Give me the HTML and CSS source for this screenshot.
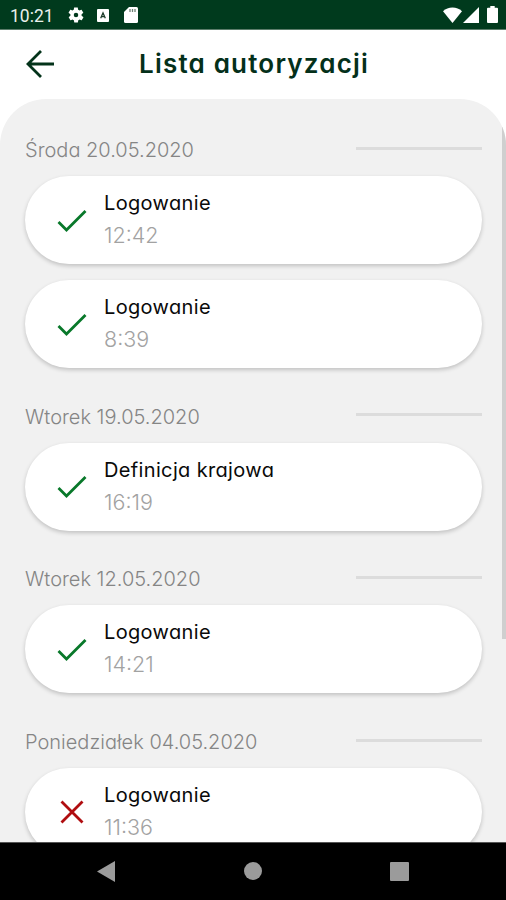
FILE: index.html
```html
<!DOCTYPE html>
<html lang="pl">
<head>
    <meta charset="UTF-8">
    <meta name="viewport" content="width=device-width, initial-scale=1.0">
    <title>Lista autoryzacji</title>
    <link rel="stylesheet" href="styles.css">
</head>
<body>
    <div class="phone">
        <div class="status-bar">
            <span class="clock">10:21</span>
            <svg class="icon-gear" width="18" height="18" viewBox="0 0 24 24"><path fill="#fff" fill-rule="evenodd" d="M19.4 13c.1-.3.1-.7.1-1s0-.7-.1-1l2.1-1.6c.2-.2.3-.4.1-.6l-2-3.500c-.1-.2-.4-.3-.6-.2l-2.500 1c-.5-.4-1.100-.7-1.700-1l-.4-2.600c0-.3-.2-.5-.5-.5h-4c-.2 0-.4.2-.5.4l-.4 2.700c-.6.2-1.100.6-1.700 1l-2.500-1c-.2-.1-.4 0-.6.2l-2 3.500c-.1.2 0 .4.1.6L4.600 11c-.1.3-.1.7-.1 1s0 .7.1 1l-2.100 1.600c-.2.2-.3.4-.1.6l2 3.500c.1.2.4.3.6.2l2.500-1c.5.4 1.100.7 1.700 1l.4 2.600c0 .3.2.5.5.5h4c.2 0 .4-.2.5-.5l.4-2.600c.6-.3 1.200-.6 1.700-1l2.500 1c.2.1.5 0 .6-.2l2-3.500c.1-.2.1-.4-.1-.6zM12 15a3 3 0 1 1 0-6 3 3 0 0 1 0 6z"/></svg>
            <svg class="icon-box" width="12" height="13" viewBox="0 0 12 13"><rect width="12" height="13" rx="1" fill="#fff"/><path d="M3.700 9.300 6 4l2.300 5.300M4.700 7.700h2.600" fill="none" stroke="#1c3c2a" stroke-width="1.300"/></svg>
            <svg class="icon-card" width="14" height="16" viewBox="0 0 14 16"><path fill="#fff" d="M5 0h7.500Q14 0 14 1.500v13q0 1.500-1.500 1.500h-11Q0 16 0 14.500V5z"/><path d="M6 2v3M8.500 2v3M11 2v3" stroke="#6d8075" stroke-width="1.300"/></svg>
            <div class="status-right">
                <svg width="19" height="16" viewBox="0 0 19 16"><path fill="#fff" d="M9.500 16 0 4.200Q4 .5 9.500.5T19 4.200z"/></svg>
                <svg width="16" height="16" viewBox="0 0 16 16"><path fill="#fff" d="M0 16 16 0v16z"/></svg>
                <svg class="icon-battery" width="11" height="17" viewBox="0 0 11 17"><path fill="#fff" d="M3.300 0h4.400v1.700H10q1 0 1 1V16q0 1-1 1H1q-1 0-1-1V2.700q0-1 1-1h2.300z"/></svg>
            </div>
        </div>

        <header class="header">
            <svg class="back" width="28" height="28" viewBox="0 0 28 28"><path d="M28 14H2M15 1 2 14l13 13" fill="none" stroke="#04331a" stroke-width="2.800"/></svg>
            <h1 class="title">Lista autoryzacji</h1>
        </header>

        <main class="panel">
            <section class="day">
                <div class="day-head"><span class="date">Środa 20.05.2020</span><span class="line"></span></div>
                <div class="card">
                    <svg class="mark" width="30" height="24" viewBox="0 0 30 24"><path class="ok" d="m1.500 13 8 8L28.500 2"/></svg>
                    <div><div class="name">Logowanie</div><div class="time">12:42</div></div>
                </div>
                <div class="card">
                    <svg class="mark" width="30" height="24" viewBox="0 0 30 24"><path class="ok" d="m1.500 13 8 8L28.500 2"/></svg>
                    <div><div class="name">Logowanie</div><div class="time">8:39</div></div>
                </div>
            </section>
            <section class="day">
                <div class="day-head"><span class="date">Wtorek 19.05.2020</span><span class="line"></span></div>
                <div class="card">
                    <svg class="mark" width="30" height="24" viewBox="0 0 30 24"><path class="ok" d="m1.500 13 8 8L28.500 2"/></svg>
                    <div><div class="name">Definicja krajowa</div><div class="time">16:19</div></div>
                </div>
            </section>
            <section class="day">
                <div class="day-head"><span class="date">Wtorek 12.05.2020</span><span class="line"></span></div>
                <div class="card">
                    <svg class="mark" width="30" height="24" viewBox="0 0 30 24"><path class="ok" d="m1.500 13 8 8L28.500 2"/></svg>
                    <div><div class="name">Logowanie</div><div class="time">14:21</div></div>
                </div>
            </section>
            <section class="day">
                <div class="day-head"><span class="date">Poniedziałek 04.05.2020</span><span class="line"></span></div>
                <div class="card">
                    <svg class="mark" width="30" height="24" viewBox="0 0 30 24"><path class="fail" d="m4.500 1.500 21 21M25.500 1.500l-21 21"/></svg>
                    <div><div class="name">Logowanie</div><div class="time">11:36</div></div>
                </div>
            </section>
            <div class="scrollbar"></div>
        </main>

        <nav class="nav-bar">
            <svg width="18" height="21" viewBox="0 0 18 21"><path fill="#9b9b9b" d="M18 0v21L0 10.500z"/></svg>
            <svg width="18" height="18" viewBox="0 0 18 18"><circle cx="9" cy="9" r="9" fill="#9b9b9b"/></svg>
            <svg width="19" height="19" viewBox="0 0 19 19"><rect width="19" height="19" rx="1" fill="#9b9b9b"/></svg>
        </nav>
    </div>
</body>
</html>
```
FILE: styles.css
```css
*{
    margin: 0;
    padding: 0;
    box-sizing: border-box;
}
body{
    background: #fff;
    font-family: Inter, "Open Sans", sans-serif;
    /* single-storey a */
    font-feature-settings: "cv11";
    overflow: hidden;
}
svg{
    display: block;
    flex: none;
}
.phone{
    display: flex;
    flex-direction: column;
    width: 506px;
    height: 900px;
    overflow: hidden;
}
/* status bar */
.status-bar{
    display: flex;
    align-items: center;
    flex: none;
    height: 30px;
    padding: 0 8px 0 10px;
    background: #003a1d;
    border-bottom: 1px solid #5c7d6b;
}
.clock{
    width: 57px;
    font-family: Roboto, sans-serif;
    font-size: 17.5px;
    color: #e9efeb;
    padding-top: 3px;
}
.icon-gear{
    margin-top: 1px;
}
.icon-box{
    margin-left: 12px;
    margin-top: 2px;
}
.icon-card{
    margin-left: 15px;
    margin-top: 1px;
}
.status-right{
    display: flex;
    align-items: center;
    gap: 1px;
    margin-left: auto;
}
.icon-battery{
    margin-left: 7px;
}
/* header */
.header{
    display: flex;
    align-items: center;
    flex: none;
    height: 68.5px;
    padding-left: 26px;
}
.title{
    margin-left: 85px;
    font-size: 26px;
    line-height: 36px;
    font-weight: 600;
    letter-spacing: 1.2px;
    color: #04301a;
}
/* list */
.panel{
    position: relative;
    flex: 1;
    min-height: 0;
    padding: 3px 24px 0 25px;
    background: #f1f1f1;
    border-radius: 46px 46px 0 0;
    overflow: hidden;
}
.day-head{
    display: flex;
    align-items: center;
    justify-content: space-between;
    height: 74.6px;
    padding-top: 19px;
}
.date{
    font-size: 20px;
    font-weight: 300;
    color: #858585;
    padding-top: 4px;
}
.line{
    width: 126px;
    height: 3px;
    background: #dcdcdc;
}
.card{
    display: flex;
    align-items: center;
    height: 88px;
    padding-left: 32px;
    background: #fff;
    border-radius: 44px;
    box-shadow: 0 2px 4px rgba(0, 0, 0, .2);
}
.card + .card{
    margin-top: 16px;
}
.mark{
    margin-top: 1px;
    margin-right: 17px;
}
.mark path{
    fill: none;
    stroke-width: 2.8;
}
.ok{
    stroke: #08782a;
}
.fail{
    stroke: #b00d10;
}
.name{
    font-size: 20px;
    line-height: 33px;
    letter-spacing: 0.35px;
    color: #0a0a0a;
}
.time{
    font-size: 21.5px;
    line-height: 31px;
    padding-bottom: 2px;
    font-weight: 350;
    color: #a2a2a2;
}
.scrollbar{
    position: absolute;
    top: 28px;
    right: 0;
    width: 4px;
    height: 512px;
    background: #cfcfcf;
}
/* navigation bar */
.nav-bar{
    display: flex;
    align-items: center;
    justify-content: space-between;
    flex: none;
    height: 58.5px;
    padding: 0 97px;
    background: #000;
    border-top: 1px solid #555;
}
```
